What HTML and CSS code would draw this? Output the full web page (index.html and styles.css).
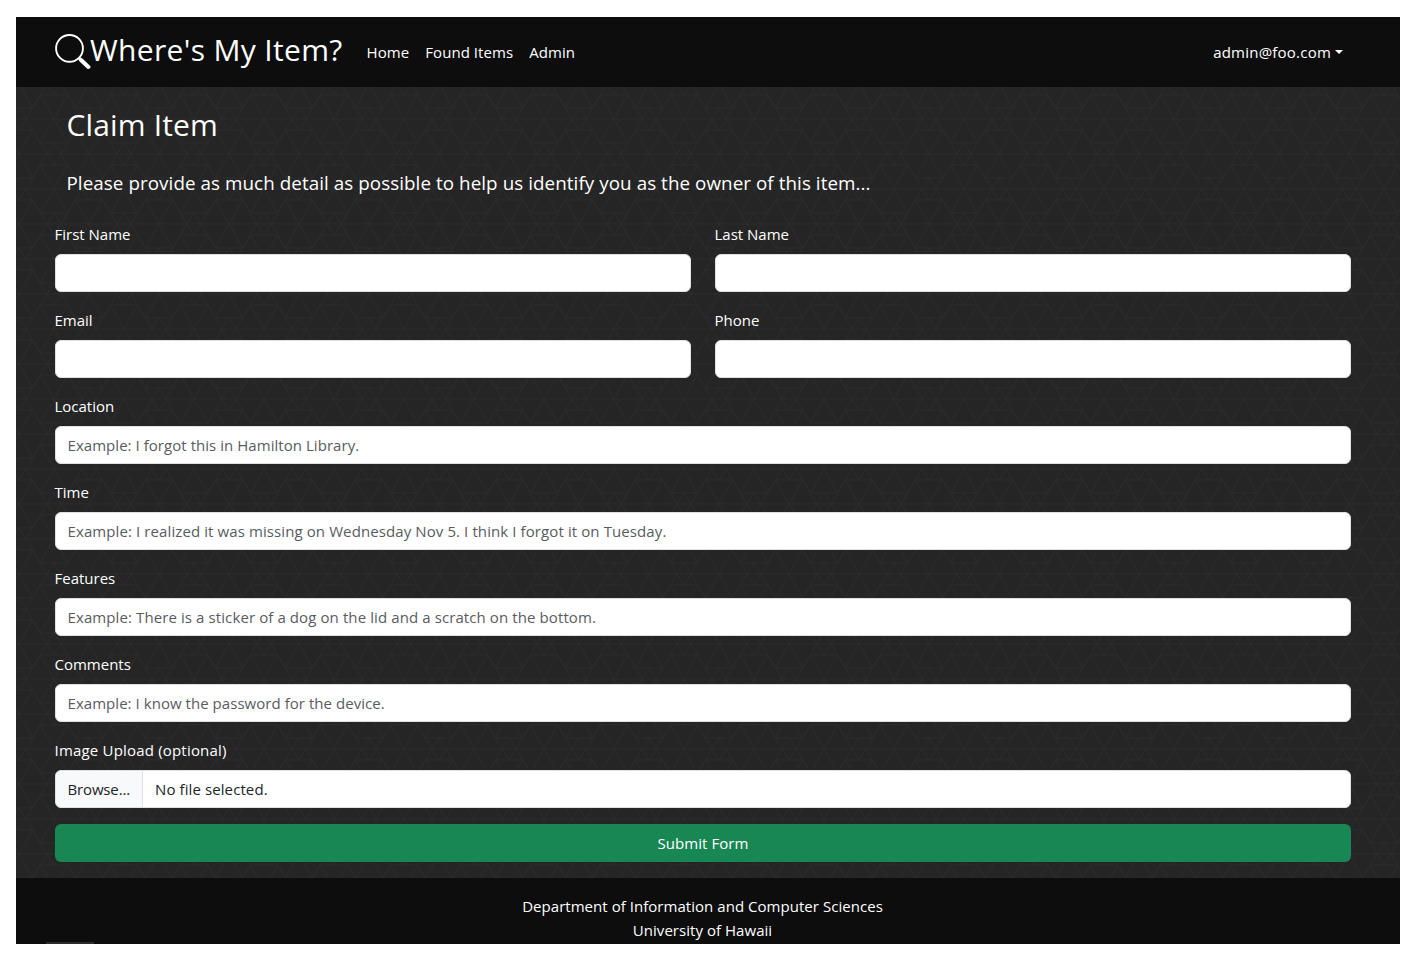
FILE: index.html
```html
<!DOCTYPE html>
<html lang="en">
<head>
<meta charset="utf-8">
<title>Where's My Item?</title>
<link rel="stylesheet" href="styles.css">
</head>
<body>
<div class="app">
  <header class="navbar">
    <a class="brand" href="#">
      <svg class="brand-icon" viewBox="0 0 36 36" aria-hidden="true">
        <circle cx="14.5" cy="14.4" r="13.4" fill="none" stroke="#fff" stroke-width="1.9"/>
        <path d="M24 24 L26 26" stroke="#fff" stroke-width="3"/>
        <path d="M26 26 L33.4 33" stroke="#fff" stroke-width="4" stroke-linecap="round"/>
      </svg>
      <span class="brand-name">Where's My Item?</span>
    </a>
    <nav class="links">
      <a class="l-home" href="#">Home</a>
      <a class="l-found" href="#">Found Items</a>
      <a class="l-admin" href="#">Admin</a>
    </nav>
    <a class="user" href="#"><span class="user-name">admin@foo.com</span><span class="caret"></span></a>
  </header>

  <main class="content">
    <h2>Claim Item</h2>
    <p class="lead">Please provide as much detail as possible to help us identify you as the owner of this item...</p>
    <form class="form">
      <div class="row">
        <div class="field"><label for="first">First Name</label><input id="first" type="text"></div>
        <div class="field"><label for="last">Last Name</label><input id="last" type="text"></div>
      </div>
      <div class="row">
        <div class="field"><label for="email">Email</label><input id="email" type="text"></div>
        <div class="field"><label for="phone">Phone</label><input id="phone" type="text"></div>
      </div>
      <div class="field"><label for="location">Location</label><input id="location" type="text" placeholder="Example: I forgot this in Hamilton Library."></div>
      <div class="field"><label for="time">Time</label><input id="time" class="wide" type="text" placeholder="Example: I realized it was missing on Wednesday Nov 5. I think I forgot it on Tuesday."></div>
      <div class="field"><label for="features">Features</label><input id="features" class="wide" type="text" placeholder="Example: There is a sticker of a dog on the lid and a scratch on the bottom."></div>
      <div class="field"><label for="comments">Comments</label><input id="comments" type="text" placeholder="Example: I know the password for the device."></div>
      <div class="field">
        <label class="upload-label">Image Upload (optional)</label>
        <div class="file"><span class="browse">Browse...</span><span class="file-name">No file selected.</span></div>
      </div>
      <button class="submit" type="button">Submit Form</button>
    </form>
  </main>

  <footer class="footer">
    <div class="dept">Department of Information and Computer Sciences</div>
    <div class="univ">University of Hawaii</div>
    <div class="tab"></div>
  </footer>
</div>
</body>
</html>
```
FILE: styles.css
```css
* { box-sizing: border-box; }
body {
  margin: 0;
  padding: 17px 16px;
  background: #fff;
  font-family: "Open Sans", "Noto Sans", sans-serif;
  font-size: 15px;
  line-height: 24px;
  color: #fff;
}
a { color: inherit; text-decoration: none; }
.app { height: 927px; overflow: hidden; display: flex; flex-direction: column; }

.navbar {
  height: 70px;
  flex: none;
  display: flex;
  align-items: center;
  padding: 0 57px 0 39px;
  background: #0d0d0d;
}
.brand { display: flex; align-items: center; margin-right: 24px; }
.brand-icon { width: 36px; height: 36px; display: block; }
.brand-name { font-size: 30px; line-height: 40px; margin: -4px 0 0 -1px; letter-spacing: 0.34px; white-space: nowrap; }
.links { display: flex; gap: 16px; letter-spacing: 0.06px; }
.user { margin-left: auto; display: flex; align-items: center; gap: 4px; letter-spacing: 0.22px; }
.caret {
  border-top: 4.8px solid #fff;
  border-left: 4.8px solid transparent;
  border-right: 4.8px solid transparent;
  margin-top: -1px;
}

.content {
  height: 791px;
  flex: none;
  padding: 19px 49px 0 39px;
  background-color: #252525;
  background-image: url("data:image/svg+xml,%3Csvg xmlns='http://www.w3.org/2000/svg' width='70' height='70' viewBox='0 0 70 70'%3E%3Cdefs%3E%3Cg id='h' fill='none' stroke='%232b2b2b'%3E%3Cpath d='M-35 0H35M-13.5 -24H13.5L28 0L13.5 24H-13.5L-28 0ZM-13.5 -24L13.5 24M13.5 -24L-13.5 24M-35 -11L-27.8 0L-35 11M35 -11L27.8 0L35 11'/%3E%3C/g%3E%3C/defs%3E%3Cuse href='%23h' x='35' y='35'/%3E%3Cuse href='%23h'/%3E%3Cuse href='%23h' x='70'/%3E%3Cuse href='%23h' y='70'/%3E%3Cuse href='%23h' x='70' y='70'/%3E%3C/svg%3E");
  background-position: 37.5px 31.5px;
}
h2 { margin: 0 0 22px 11.5px; font-size: 30px; font-weight: 400; line-height: 38px; letter-spacing: 0.15px; }
.lead { margin: 0 0 21px 11.5px; padding-top: 5px; height: 35px; font-size: 18.8px; line-height: 24px; letter-spacing: 0.075px; white-space: nowrap; }
.form { display: flex; flex-direction: column; gap: 16px; }
.row { display: grid; grid-template-columns: 1fr 1fr; gap: 24px; }
.field { display: flex; flex-direction: column; gap: 8px; min-width: 0; }
label { display: block; height: 24px; margin-left: -0.5px; }
.upload-label { letter-spacing: 0.19px; }
input, .file {
  width: 100%;
  height: 38px;
  border: 1px solid #dee2e6;
  border-radius: 6px;
  background: #fff;
  color: #212529;
  font: inherit;
}
input { padding: 6px 11.5px; letter-spacing: 0.045px; }
input.wide { letter-spacing: 0.1px; }
input::placeholder { color: #595c5f; opacity: 1; }
.file { display: flex; overflow: hidden; line-height: 36px; }
.browse { width: 87px; padding-left: 11.5px; background: #f8f9fa; border-right: 1px solid #dee2e6; letter-spacing: -0.15px; }
.file-name { padding-left: 12px; letter-spacing: 0.1px; }
.submit {
  height: 38px;
  border: 0;
  border-radius: 6px;
  background: #198754;
  color: #fff;
  font: inherit;
  letter-spacing: 0.06px;
}
.footer {
  position: relative;
  flex: 1;
  padding: 16px 11px 0 0;
  background: #0d0d0d;
  text-align: center;
  letter-spacing: 0.04px;
}
.tab { position: absolute; left: 30px; bottom: 0; width: 48px; height: 2px; background: #2b2b2b; }
```
